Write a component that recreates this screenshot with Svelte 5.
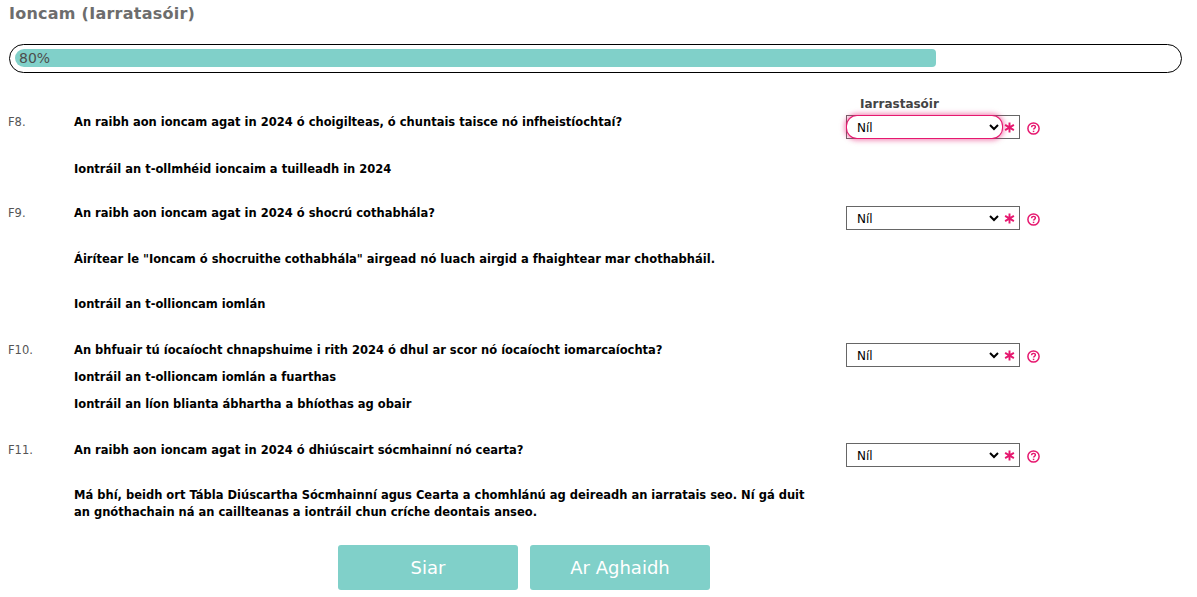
<div class="page">
  <h2 class="title">Ioncam (Iarratasóir)</h2>

  <div class="progress">
    <div class="bar"><span>80%</span></div>
  </div>

  <div class="applicant">Iarrastasóir</div>

  <section class="row r8">
    <div class="num">F8.</div>
    <div class="body">
      <p>An raibh aon ioncam agat in 2024 ó choigilteas, ó chuntais taisce nó infheistíochtaí?</p>
      <p class="gap30">Iontráil an t-ollmhéid ioncaim a tuilleadh in 2024</p>
    </div>
    {@render field(true)}
  </section>

  <section class="row r9">
    <div class="num">F9.</div>
    <div class="body">
      <p>An raibh aon ioncam agat in 2024 ó shocrú cothabhála?</p>
      <p class="gap29">Áirítear le "Ioncam ó shocruithe cothabhála" airgead nó luach airgid a fhaightear mar chothabháil.</p>
      <p class="gap28">Iontráil an t-ollioncam iomlán</p>
    </div>
    {@render field(false)}
  </section>

  <section class="row r10">
    <div class="num">F10.</div>
    <div class="body">
      <p>An bhfuair tú íocaíocht chnapshuime i rith 2024 ó dhul ar scor nó íocaíocht iomarcaíochta?</p>
      <p class="gap10">Iontráil an t-ollioncam iomlán a fuarthas</p>
      <p class="gap10">Iontráil an líon blianta ábhartha a bhíothas ag obair</p>
    </div>
    {@render field(false)}
  </section>

  <section class="row r11">
    <div class="num">F11.</div>
    <div class="body">
      <p>An raibh aon ioncam agat in 2024 ó dhiúscairt sócmhainní nó cearta?</p>
      <p class="gap28 narrow">Má bhí, beidh ort Tábla Diúscartha Sócmhainní agus Cearta a chomhlánú ag deireadh an iarratais seo. Ní gá duit an gnóthachain ná an caillteanas a iontráil chun críche deontais anseo.</p>
    </div>
    {@render field(false)}
  </section>

  <div class="actions">
    <button type="button">Siar</button>
    <button type="button">Ar Aghaidh</button>
  </div>
</div>

{#snippet field(focused)}
  <div class="field">
    <div class="box">
      <select class:focused>
        <option>Níl</option>
        <option>Tá</option>
      </select>
      <svg class="star" viewBox="0 0 12 12" width="11" height="11" aria-hidden="true">
        <path d="M6 .5v11M1.2 3.2l9.6 5.6M10.8 3.2l-9.6 5.6" stroke="#e6186f" stroke-width="2.1" fill="none"/>
      </svg>
    </div>
    <svg class="help" viewBox="0 0 13 13" width="13" height="13" aria-hidden="true">
      <circle cx="6.5" cy="6.5" r="5.6" stroke="#e6186f" stroke-width="1.5" fill="none"/>
      <path d="M4.6 5.2c0-1.2.9-1.8 1.9-1.8s1.9.6 1.9 1.6c0 1.3-1.9 1.3-1.9 2.6" stroke="#e6186f" stroke-width="1.4" fill="none"/>
      <rect x="5.8" y="8.7" width="1.5" height="1.4" fill="#e6186f"/>
    </svg>
  </div>
{/snippet}

<style>
  :global(body) {
    margin: 0;
    background: #fff;
    font-family: "DejaVu Sans", Verdana, sans-serif;
  }
  .page {
    width: 1197px;
    height: 597px;
    overflow: hidden;
    box-sizing: border-box;
    padding-top: 5px;
  }
  .title {
    margin: 0 0 0 9px;
    font-size: 16px;
    line-height: 18px;
    font-weight: 700;
    color: #6d6d6d;
    letter-spacing: 0.25px;
  }
  .progress {
    box-sizing: border-box;
    margin: 21px 0 0 9px;
    width: 1173px;
    height: 29px;
    border: 1px solid #000;
    border-radius: 15px;
    padding: 4px 5px;
  }
  .bar {
    width: 921px;
    height: 18px;
    background: #80d0c9;
    border-radius: 9px 4px 4px 9px;
    color: #4d4d4d;
    font-size: 14px;
    line-height: 18px;
  }
  .bar span { margin-left: 4px; }
  .applicant {
    margin: 24px 0 0 860px;
    font-size: 12px;
    line-height: 15px;
    font-weight: 700;
    color: #444;
  }
  .row {
    display: grid;
    grid-template-columns: 66px 772px 1fr;
    padding-left: 8px;
    font-size: 11.5px;
    line-height: 17px;
  }
  .num { color: #555; font-size: 11.5px; }
  .body p { margin: 0; font-weight: 700; color: #000; }
  .gap30 { margin-top: 30px !important; }
  .gap29 { margin-top: 29px !important; }
  .gap28 { margin-top: 28px !important; }
  .gap10 { margin-top: 10px !important; }
  .narrow { width: 740px; }
  .r8 { margin-top: 2px; height: 91px; }
  .r9 { height: 137px; }
  .r10 { height: 100px; }
  .r11 { height: 103px; }
  .field {
    display: flex;
    align-items: center;
    align-self: start;
    margin-top: 1px;
  }
  .box {
    box-sizing: border-box;
    width: 174px;
    height: 24px;
    border: 1px solid #666;
    display: flex;
    align-items: center;
  }
  select {
    box-sizing: border-box;
    width: 155px;
    height: 22px;
    border: none;
    background: #fff;
    padding: 1px 0 0 6px;
    font-family: inherit;
    font-size: 12px;
    color: #000;
    outline: none;
    flex: none;
  }
  select.focused {
    border-radius: 10px;
    box-shadow: 0 0 0 1px #e6186f, 0 0 5px 2.5px rgba(230, 24, 111, 0.5);
  }
  .star { margin: 1px 0 0 2px; flex: none; }
  .help { margin: 2px 0 0 7px; flex: none; }
  .actions {
    display: flex;
    gap: 12px;
    margin-left: 338px;
  }
  button {
    width: 180px;
    height: 45px;
    border: none;
    border-radius: 3px;
    background: #80d0c9;
    color: #fff;
    font-family: inherit;
    font-size: 18px;
    padding: 0;
  }
</style>
